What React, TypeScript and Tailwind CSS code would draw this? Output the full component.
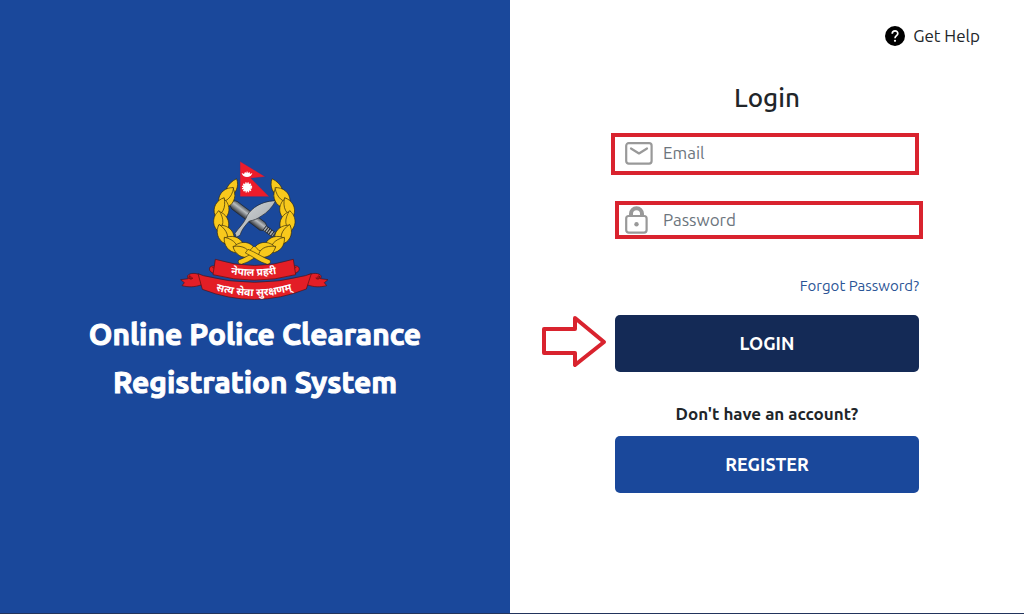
import React from "react";

const LEAF_ANGLES = [216, 194, 172, 150, 128, 108];
const LEAF = "M0 24 C-20 14 -22 -10 -5 -36 C13 -22 18 6 0 24 Z";
const LEAF_MIRRORED = "M0 24 C20 14 22 -10 5 -36 C-13 -22 -18 6 0 24 Z";

function WreathHalf() {
  return (
    <g fill="#f8c91c" stroke="#2b230c" strokeWidth="1.8" strokeLinejoin="round">
      <path d="M188 128 C140 165 138 230 176 272 C194 292 220 302 254 305" fill="none" stroke="#f8c91c" strokeWidth="26" />
      <path d={LEAF} transform="translate(186 120) rotate(30)" />
      {LEAF_ANGLES.map((angle) => (
        <g key={angle} transform={`translate(254 202) rotate(${angle})`}>
          <path d={LEAF} transform="translate(91 0) rotate(164)" />
          <path d={LEAF_MIRRORED} transform="translate(113 0) rotate(188)" />
        </g>
      ))}
      <path d="M206 330 C226 324 250 306 272 298 L280 309 C258 318 240 336 214 343 Q201 341 206 330 Z" />
    </g>
  );
}

function RibbonEnds() {
  return (
    <g fill="#e31e26" stroke="#4d1014" strokeWidth="2" strokeLinejoin="round">
      <path d="M142 350 C126 344 115 350 119 361 C123 370 137 372 148 377 Z" />
      <path d="M127 352 q10 2 5 11" fill="none" />
      <path d="M90 374 C62 364 46 376 55 386 L32 389 L43 398 L36 407 C56 412 72 412 96 404 Z" />
      <path d="M60 376 C50 384 62 392 69 384" fill="#a5131b" />
    </g>
  );
}

function Emblem() {
  return (
    <svg viewBox="0 0 510 480" className="h-40 w-[170px]" role="img" aria-label="Nepal Police emblem">
      <defs>
        <linearGradient id="baton" x1="0" y1="0" x2="0" y2="1">
          <stop offset="0" stopColor="#555b62" />
          <stop offset="0.4" stopColor="#b9bdc0" />
          <stop offset="1" stopColor="#30343b" />
        </linearGradient>
        <linearGradient id="blade" x1="0" y1="0" x2="1" y2="1">
          <stop offset="0" stopColor="#d5d9db" />
          <stop offset="1" stopColor="#9a9fa4" />
        </linearGradient>
        <path id="upperLine" d="M150 366 Q254 390 352 364" />
        <path id="lowerLine" d="M104 410 Q254 466 400 410" />
      </defs>

      <g transform="translate(190 163) rotate(37)" stroke="#20252d" strokeWidth="2">
        <path d="M4 -14 H110 L118 -9 V9 L110 14 H4 Q-9 10 -9 0 Q-9 -10 4 -14 Z" fill="url(#baton)" />
        <path d="M118 -8 H152 V8 H118 Z" fill="#a5aaae" />
        <path d="M125 -9 V9 M132 -9 V9 M139 -9 V9 M147 -9 V9" strokeWidth="3" />
      </g>
      <path
        d="M317 152 C292 153 270 160 253 173 C240 183 232 193 228 205 C220 222 206 234 195 250 L199 262 L210 256 C214 240 226 226 238 213 C251 211 262 207 274 198 C292 188 308 170 317 152 Z"
        fill="url(#blade)"
        stroke="#20252d"
        strokeWidth="2"
      />

      <WreathHalf />
      <g transform="translate(506 0) scale(-1 1)">
        <WreathHalf />
      </g>

      <path d="M210 34 L286 80 L243 85 L298 140 H210 Z" fill="#ed1c2b" stroke="#283d91" strokeWidth="1.5" />
      <path d="M215 69 L222 72 L225 66 L229 69 L231 63 L234 69 L239 66 L240 72 L247 69 Q244 81 231 81 Q218 81 215 69 Z" fill="#fff" />
      <circle cx="231" cy="112" r="12" fill="#fff" />
      <circle cx="231" cy="112" r="13" fill="none" stroke="#fff" strokeWidth="5" strokeDasharray="4 2.8" />

      <RibbonEnds />
      <g transform="translate(506 0) scale(-1 1)">
        <RibbonEnds />
      </g>
      <path d="M84 371 Q92 374 100 377 Q254 417 406 377 L424 371 L409 417 Q254 479 97 418 Z" fill="#e31e26" stroke="#4d1014" strokeWidth="2" />
      <path d="M136 328 Q254 365 370 328 L377 374 Q254 407 129 374 Z" fill="#e31e26" stroke="#4d1014" strokeWidth="2" />
      <g fill="#fff" textAnchor="middle" fontWeight="700" fontFamily="'Noto Sans Devanagari', 'Noto Sans', 'Lohit Devanagari', sans-serif">
        <text fontSize="31">
          <textPath href="#upperLine" startOffset="50%">नेपाल प्रहरी</textPath>
        </text>
        <text fontSize="32">
          <textPath href="#lowerLine" startOffset="50%">सत्य सेवा सुरक्षणम्</textPath>
        </text>
      </g>
    </svg>
  );
}

function MailIcon() {
  return (
    <svg viewBox="0 0 28 23" className="h-[23px] w-7 shrink-0" fill="none" stroke="#999" strokeWidth="2.2" strokeLinecap="round" strokeLinejoin="round" aria-hidden="true">
      <rect x="1.2" y="1.2" width="25.4" height="20.4" rx="2.5" />
      <path d="M6 6.5 L14 11.5 L22 6.5" />
    </svg>
  );
}

function LockIcon() {
  return (
    <svg viewBox="0 0 28 28" className="h-7 w-7 shrink-0" fill="none" stroke="#999" aria-hidden="true">
      <path d="M6 10 V7.7 a5.5 5.5 0 0 1 11 0 V10" strokeWidth="4" />
      <rect x="1.2" y="10" width="20.4" height="16.6" rx="2.5" strokeWidth="2.2" />
      <circle cx="11.5" cy="18.3" r="2.2" fill="#999" stroke="none" />
    </svg>
  );
}

function PointerArrow() {
  return (
    <svg viewBox="0 0 66 54" className="absolute top-0 right-full mr-2 h-[54px] w-[66px]" fill="none" stroke="#d9232e" strokeWidth="4" strokeLinejoin="round" aria-hidden="true">
      <path d="M3 14 H34 V3 L63 27 L34 50 V38 H3 Z" />
    </svg>
  );
}

export default function App() {
  return (
    <div className="flex min-h-screen border-b border-[#22345c] bg-white font-['Ubuntu','Noto_Sans',sans-serif] text-[#212529]">
      <section className="flex w-[49.8%] flex-col items-center bg-[#1a489b] px-6 pt-[150px] text-white">
        <Emblem />
        <h1 className="max-w-[400px] text-center text-[30px] leading-[48px] font-bold [-webkit-text-stroke:1px_currentColor]">
          Online Police Clearance Registration System
        </h1>
      </section>

      <main className="flex flex-1 flex-col items-center">
        <a href="#help" className="mt-6 mr-11 flex items-center gap-2 self-end text-[17px] leading-6">
          <svg viewBox="0 0 20 20" className="h-5 w-5" aria-hidden="true">
            <circle cx="10" cy="10" r="10" fill="#000" />
            <path d="M7.2 7.7 C7.3 3.8 13 4.1 12.8 7.6 C12.7 9.6 10 9.7 10 12.2" fill="none" stroke="#fff" strokeWidth="1.7" />
            <circle cx="10" cy="14.8" r="1.1" fill="#fff" />
          </svg>
          Get Help
        </a>

        <form className="mt-8 flex w-[304px] flex-col" onSubmit={(e) => e.preventDefault()}>
          <h2 className="text-center text-[26px] leading-9 font-medium">Login</h2>

          <label className="mt-[17px] -ml-1 flex h-[42px] items-center gap-2 border-4 border-[#d9232e] pb-0.5 pl-2.5">
            <MailIcon />
            <input type="email" aria-label="Email" placeholder="Email" className="min-w-0 flex-1 bg-transparent pl-0.5 text-[17px] leading-6 outline-none placeholder:text-[#6c757d]" />
          </label>

          <label className="mt-[26px] -mr-1 flex h-[38px] items-center gap-2 border-4 border-[#d9232e] pl-1.5">
            <LockIcon />
            <input type="password" aria-label="Password" placeholder="Password" className="min-w-0 flex-1 bg-transparent pl-0.5 text-[17px] leading-6 outline-none placeholder:text-[#6c757d]" />
          </label>

          <a href="#forgot" className="mt-9 self-end text-[15px] leading-[22px] text-[#2b5596]">
            Forgot Password?
          </a>

          <div className="relative mt-[18px]">
            <PointerArrow />
            <button type="submit" className="h-[57px] w-full rounded-[5px] bg-[#142a56] text-[18px] font-bold text-white">
              LOGIN
            </button>
          </div>

          <p className="mt-[30px] text-center text-[17px] leading-6 font-bold">Don't have an account?</p>
          <button type="button" className="mt-[10px] h-[57px] w-full rounded-[5px] bg-[#1a489b] text-[18px] font-bold text-white">
            REGISTER
          </button>
        </form>
      </main>
    </div>
  );
}
